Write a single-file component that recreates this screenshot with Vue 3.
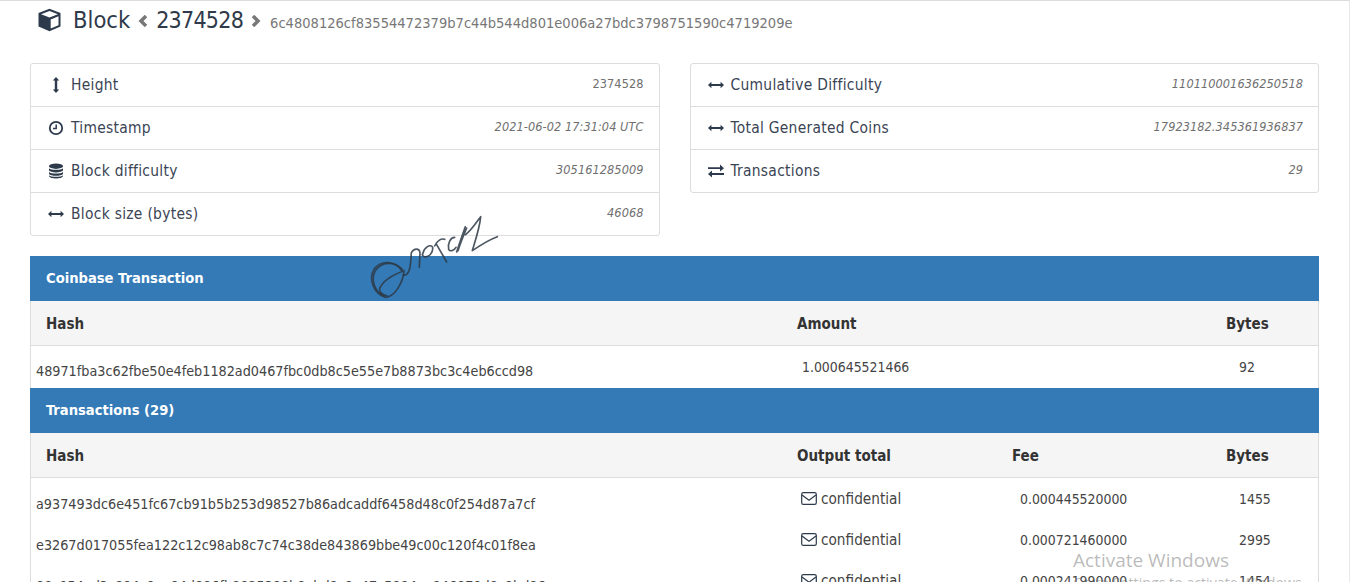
<script setup>
const leftRows = [
  { icon: 'v', label: 'Height', value: '2374528', plain: true },
  { icon: 'clock', label: 'Timestamp', value: '2021-06-02 17:31:04 UTC' },
  { icon: 'db', label: 'Block difficulty', value: '305161285009' },
  { icon: 'h', label: 'Block size (bytes)', value: '46068' },
]
const rightRows = [
  { icon: 'h', label: 'Cumulative Difficulty', value: '110110001636250518' },
  { icon: 'h', label: 'Total Generated Coins', value: '17923182.345361936837' },
  { icon: 'ex', label: 'Transactions', value: '29' },
]
const txs = [
  { hash: 'a937493dc6e451fc67cb91b5b253d98527b86adcaddf6458d48c0f254d87a7cf', fee: '0.000445520000', bytes: '1455' },
  { hash: 'e3267d017055fea122c12c98ab8c7c74c38de843869bbe49c00c120f4c01f8ea', fee: '0.000721460000', bytes: '2995' },
  { hash: '88c054ed3c894c8ea84d886fb8825388b8ebd8c8e47c5884ea846878d8c8bd86', fee: '0.000241990000', bytes: '1454' },
]
</script>

<template>
  <div class="page">
    <h1 class="title">
      <svg class="cube" viewBox="0 0 24 24">
        <path d="M12 .8 23 5v13.6L12 23.2 1 18.6V5z" fill="#2c3a4b" />
        <path d="M3.6 6.2 12 3l8.4 3.2L12 9.4z" fill="#fff" />
        <path d="M13.2 11.4 21 8.3v8.9l-7.8 3.3z" fill="#fff" />
      </svg>
      <span class="block-word">Block</span>
      <svg class="chev" viewBox="0 0 10 12"><path d="M8 1 3 6l5 5" /></svg>
      <span class="num">2374528</span>
      <svg class="chev" viewBox="0 0 10 12"><path d="M2 1l5 5-5 5" /></svg>
      <small class="hash-title">6c4808126cf83554472379b7c44b544d801e006a27bdc3798751590c4719209e</small>
    </h1>

    <div class="panels">
      <ul v-for="(list, i) in [leftRows, rightRows]" :key="i" class="panel">
        <li v-for="r in list" :key="r.label" class="item">
          <svg class="ico" viewBox="0 0 16 16">
            <g v-if="r.icon === 'v'" fill="#2c3a4b">
              <path d="M8 0 11.2 3.4H9.2V12.6H11.2L8 16 4.8 12.6H6.8V3.4H4.8z" />
            </g>
            <g v-else-if="r.icon === 'h'" fill="#2c3a4b">
              <path d="M0 8 3.4 4.8V6.9H12.6V4.8L16 8 12.6 11.2V9.1H3.4V11.2z" />
            </g>
            <g v-else-if="r.icon === 'clock'">
              <circle cx="8" cy="8" r="6.2" fill="none" stroke="#2c3a4b" stroke-width="1.8" />
              <path d="M8.2 4.4V8.6H5" fill="none" stroke="#2c3a4b" stroke-width="1.5" />
            </g>
            <g v-else-if="r.icon === 'db'" fill="#2c3a4b">
              <ellipse cx="8" cy="3.2" rx="7" ry="2.7" />
              <path d="M1 5.2C2.5 7.4 13.5 7.4 15 5.2V7.6C13.5 10 2.5 10 1 7.6z" />
              <path d="M1 8.9C2.5 11.1 13.5 11.1 15 8.9V11C13.5 13.4 2.5 13.4 1 11z" />
              <path d="M1 12.2C2.5 14.4 13.5 14.4 15 12.2V13.2C13.5 16.2 2.5 16.2 1 13.2z" />
            </g>
            <g v-else fill="#2c3a4b">
              <path d="M0 4.2H12V1.6L16 5.2 12 8.4V6H0z" />
              <path d="M16 10H4V7.6L0 11 4 14.4V11.9H16z" />
            </g>
          </svg>
          <span class="label">{{ r.label }}</span>
          <span class="value" :class="{ plain: r.plain }">{{ r.value }}</span>
        </li>
      </ul>
    </div>

    <section class="table-block">
      <h3 class="bar">Coinbase Transaction</h3>
      <div class="grid head">
        <div class="c1">Hash</div>
        <div class="c2">Amount</div>
        <div class="c3"></div>
        <div class="c4">Bytes</div>
      </div>
      <div class="grid row cb">
        <div class="hash">48971fba3c62fbe50e4feb1182ad0467fbc0db8c5e55e7b8873bc3c4eb6ccd98</div>
        <div class="amount">1.000645521466</div>
        <div></div>
        <div class="bytes">92</div>
      </div>

      <h3 class="bar">Transactions (29)</h3>
      <div class="grid head">
        <div class="c1">Hash</div>
        <div class="c2">Output total</div>
        <div class="c3">Fee</div>
        <div class="c4">Bytes</div>
      </div>
      <div v-for="t in txs" :key="t.bytes" class="grid row">
        <div class="hash">{{ t.hash }}</div>
        <div class="conf">
          <svg class="env" viewBox="0 0 16 13">
            <rect x=".7" y=".7" width="14.6" height="11.6" rx="1.6" fill="none" stroke="#2c3a4b" stroke-width="1.2" />
            <path d="M1 3 8 8.2 15 3" fill="none" stroke="#2c3a4b" stroke-width="1.2" />
          </svg>
          <span class="conf-text">confidential</span>
        </div>
        <div class="fee">{{ t.fee }}</div>
        <div class="bytes">{{ t.bytes }}</div>
      </div>
    </section>

    <svg class="signature" viewBox="0 0 540 300">
      <path d="M185 182C165 150 122 150 102 178 86 205 98 248 135 262 165 262 190 215 192 182 170 190 132 205 119 235 117 250 130 255 142 258" />
      <path d="M187 178C160 152 125 155 106 182 92 208 102 244 132 258" />
      <path d="M190 195C204 198 211 178 212 155L214 128C222 114 238 114 240 128L238 172" />
      <path d="M248 132C252 112 272 100 278 112 280 128 266 144 252 140 246 136 246 132 248 132" />
      <path d="M284 108C292 92 304 84 314 88M290 104 320 156" />
      <path d="M344 82C332 82 322 100 326 118 330 126 342 122 348 112" />
      <path d="M350 126C358 100 366 78 376 50M354 122C362 98 370 78 380 54" />
      <path d="M376 74C390 66 406 42 422 20 420 50 406 92 397 122 420 106 445 90 472 80" />
    </svg>

    <div class="watermark">
      <div class="wm-title">Activate Windows</div>
      <div class="wm-sub">Go to Settings to activate Windows.</div>
    </div>
  </div>
</template>

<style>
html, body { margin: 0; height: 582px; overflow: hidden; background: #fff; }
</style>

<style scoped>
.page {
  position: relative;
  height: 582px;
  overflow: hidden;
  box-sizing: border-box;
  border-top: 1px solid #ddd;
  border-right: 1px solid #e8e8e8;
  padding: 0 30px;
  font-family: "DejaVu Sans", sans-serif;
  font-stretch: condensed;
  font-size: 13.9px;
  color: #333;
}
.title {
  display: flex;
  align-items: center;
  height: 38px;
  margin: 0;
  font-weight: 400;
  font-size: 23.5px;
  color: #2f3a4a;
}
.cube { width: 25px; height: 24px; margin-left: 7px; margin-right: 11px; }
.block-word { margin-right: 8px; }
.chev { width: 10px; height: 12px; fill: none; stroke: #777; stroke-width: 3.5; margin-top: 2px; }
.num { margin: 0 8px; font-size: 23px; letter-spacing: -.75px; }
.hash-title { font-size: 14.55px; color: #777; margin-left: 9px; padding-top: 4px; }
.panels { display: flex; gap: 30px; margin-top: 24px; align-items: flex-start; }
.panel {
  flex: 1;
  list-style: none;
  margin: 0;
  padding: 0;
  border: 1px solid #ddd;
  border-radius: 3px;
}
.item {
  display: flex;
  align-items: center;
  height: 42px;
  padding: 0 15px 0 17px;
  border-top: 1px solid #ddd;
  font-size: 15.4px;
  letter-spacing: .3px;
  color: #3a4454;
}
.item:first-child { border-top: 0; }
.ico { width: 16px; height: 16px; margin-right: 7px; flex: none; }
.label { flex: 1; padding-bottom: 1px; }
.value { font-style: italic; font-size: 12.6px; letter-spacing: .08px; color: #6f6f6f; padding-bottom: 4px; }
.value.plain { font-style: normal; }
.table-block { margin-top: 20px; border-left: 1px solid #ddd; border-right: 1px solid #ddd; }
.bar {
  margin: 0 -1px;
  height: 45px;
  line-height: 44px;
  padding-left: 16px;
  background: #337ab7;
  color: #fff;
  font-size: 14.6px;
  font-weight: 700;
}
.grid {
  display: grid;
  grid-template-columns: 750px 215px 214px 1fr;
}
.head {
  height: 44px;
  line-height: 47px;
  background: #f5f5f5;
  border-bottom: 1px solid #ddd;
  font-size: 15px;
  font-weight: 700;
  color: #333;
}
.head > div { padding-left: 16px; }
.head > .c1 { padding-left: 15px; }
.row { height: 41px; color: #444; }
.row.cb { height: 42px; }
.row > div { line-height: 20px; padding-top: 11px; box-sizing: border-box; }
.row > .hash { padding-top: 16px; padding-left: 5px; font-size: 14.25px; white-space: nowrap; overflow: hidden; }
.row.cb > .hash { padding-top: 15px; }
.amount { padding-left: 21px; }
.conf { padding-left: 20px; display: flex; align-items: flex-start; gap: 4px; }
.conf-text { font-size: 15.2px; }
.env { width: 16px; height: 13px; margin-top: 3px; flex: none; }
.fee { padding-left: 24px; }
.bytes { padding-left: 29px; }
.signature {
  position: absolute;
  left: 340px;
  top: 209px;
  width: 180px;
  height: 100px;
  pointer-events: none;
  fill: none;
  stroke: #2e3a46;
  stroke-opacity: .85;
  stroke-width: 5;
  stroke-linecap: round;
  stroke-linejoin: round;
}
.watermark {
  position: absolute;
  left: 1073px;
  top: 547px;
  color: rgba(130,130,130,.55);
  font-family: "Open Sans", sans-serif;
  font-stretch: normal;
  pointer-events: none;
  white-space: nowrap;
}
.wm-title { font-size: 19px; line-height: 24px; }
.wm-sub { font-size: 14.2px; line-height: 16px; margin-top: 3px; }
</style>
